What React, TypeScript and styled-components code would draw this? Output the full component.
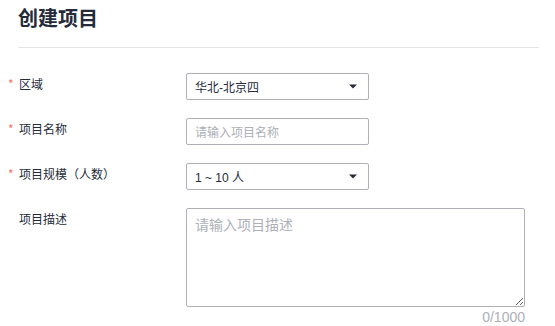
import React from "react";
import styled, { createGlobalStyle } from "styled-components";

const Global = createGlobalStyle`
  html, body { margin: 0; padding: 0; background: #fff; }
  body { font-family: "Noto Sans CJK SC", "Noto Sans", sans-serif; color: #252b3a; }
  * { box-sizing: border-box; }
`;

const Page = styled.div`
  width: 555px;
  height: 326px;
  overflow: hidden;
  padding: 0 16px 0 0;
`;

const Title = styled.h1`
  margin: 0 0 0 18px;
  font-size: 20px;
  line-height: 36px;
  font-weight: 700;
  color: #252b3a;
`;

const Divider = styled.div`
  margin: 11px 0 0 18px;
  height: 1px;
  background: #e3e5e9;
`;

const Form = styled.div`
  display: grid;
  grid-template-columns: 178px 1fr;
  row-gap: 18px;
  margin-top: 25px;
  padding-left: 8px;
`;

const Label = styled.div`
  display: flex;
  align-items: flex-start;
  font-size: 12px;
  line-height: 21px;
  color: #252b3a;
`;

const Star = styled.span<{ $show: boolean }>`
  display: inline-block;
  width: 11px;
  color: #f66f6a;
  font-size: 12px;
  line-height: 21px;
  visibility: ${(p) => (p.$show ? "visible" : "hidden")};
`;

const Box = styled.div<{ $w: number }>`
  width: ${(p) => p.$w}px;
  height: 27px;
  border: 1px solid #adb0b8;
  border-radius: 2px;
  display: flex;
  align-items: center;
  justify-content: space-between;
  padding: 0 11px 0 8px;
  font-size: 12px;
`;

const Value = styled.span<{ $placeholder?: boolean }>`
  color: ${(p) => (p.$placeholder ? "#adb0b8" : "#252b3a")};
  font-family: "Liberation Sans", "Noto Sans CJK SC", sans-serif;
`;

const TextWrap = styled.div`
  display: flex;
  flex-direction: column;
  align-items: flex-end;
  width: 339px;
`;

const TextArea = styled.textarea`
  width: 339px;
  height: 99px;
  border: 1px solid #adb0b8;
  border-radius: 2px;
  padding: 5px 8px;
  font-size: 14px;
  line-height: 20px;
  font-family: "Noto Sans CJK SC", "Noto Sans", sans-serif;
  color: #252b3a;
  display: block;
  outline: none;
  &::placeholder { color: #adb0b8; }
`;

const Counter = styled.div`
  margin-top: 2px;
  font-size: 14px;
  line-height: 16px;
  color: #adb0b8;
  font-family: "Liberation Sans", Arial, sans-serif;
`;

const Arrow = () => (
  <svg width="8" height="5" viewBox="0 0 8 5">
    <path d="M0 0.5 L8 0.5 L4 4.5 Z" fill="#252b3a" />
  </svg>
);

export default function App() {
  return (
    <Page>
      <Global />
      <Title>创建项目</Title>
      <Divider />
      <Form>
        <Label><Star $show>*</Star>区域</Label>
        <Box $w={183}><Value>华北-北京四</Value><Arrow /></Box>

        <Label><Star $show>*</Star>项目名称</Label>
        <Box $w={183}><Value $placeholder>请输入项目名称</Value></Box>

        <Label><Star $show>*</Star>项目规模（人数）</Label>
        <Box $w={183}><Value>1 ~ 10 人</Value><Arrow /></Box>

        <Label><Star $show={false}>*</Star>项目描述</Label>
        <TextWrap>
          <TextArea placeholder="请输入项目描述" />
          <Counter>0/1000</Counter>
        </TextWrap>
      </Form>
    </Page>
  );
}
